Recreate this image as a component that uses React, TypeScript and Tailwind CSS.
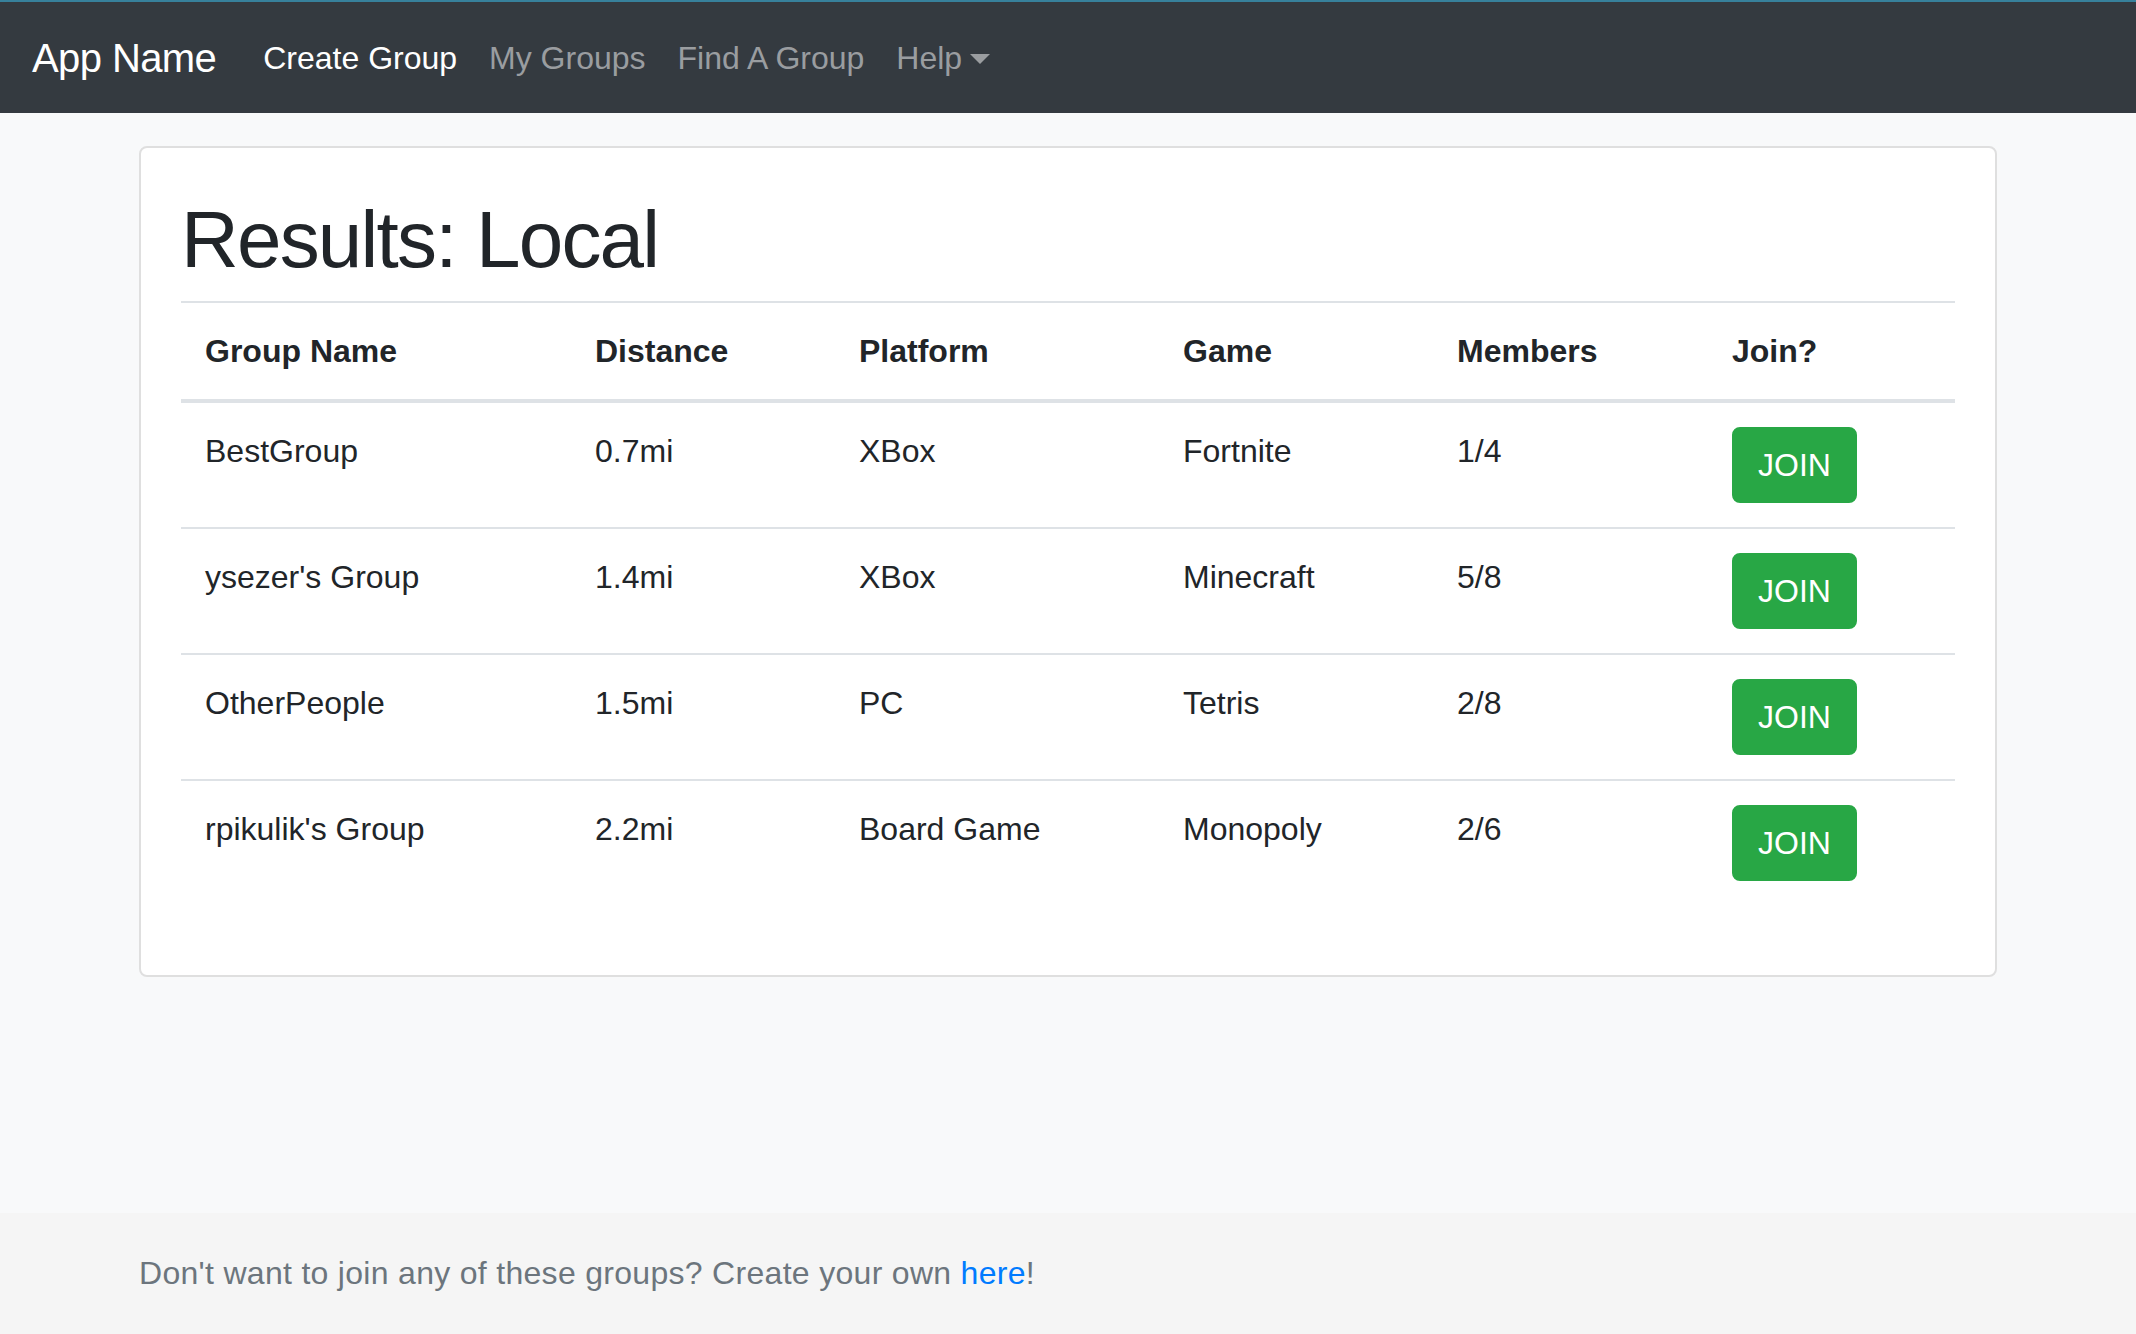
const groups = [
  { name: "BestGroup", distance: "0.7mi", platform: "XBox", game: "Fortnite", members: "1/4" },
  { name: "ysezer's Group", distance: "1.4mi", platform: "XBox", game: "Minecraft", members: "5/8" },
  { name: "OtherPeople", distance: "1.5mi", platform: "PC", game: "Tetris", members: "2/8" },
  { name: "rpikulik's Group", distance: "2.2mi", platform: "Board Game", game: "Monopoly", members: "2/6" },
];

function Navbar() {
  return (
    <nav className="h-[113px] shrink-0 bg-[#343a40] border-t-2 border-[#37819c] flex items-center px-[32px]">
      <a href="#" className="text-[40px] leading-[60px] text-white mr-[31px] tracking-[-0.6px]">
        App Name
      </a>
      <ul className="flex items-center text-[32px] leading-[48px]">
        <li className="px-[16px] text-white">Create Group</li>
        <li className="px-[16px] text-[#9a9da0]">My Groups</li>
        <li className="px-[16px] text-[#9a9da0]">Find A Group</li>
        <li className="px-[16px] text-[#9a9da0] flex items-center">
          Help
          <span className="ml-[8px] mt-[2px] w-0 h-0 border-x-[10px] border-x-transparent border-t-[10px] border-t-[#9a9da0]" />
        </li>
      </ul>
    </nav>
  );
}

function ResultsCard() {
  const th = "text-left font-bold align-bottom px-[24px] py-[24px] border-t-2 border-b-4 border-[#dee2e6]";
  const td = "align-top p-[24px] border-t-2 border-[#dee2e6]";
  return (
    <div className="w-[1858px] mx-auto mt-[33px] bg-white border-2 border-[#dfdfdf] rounded-[8px] px-[40px] pt-[40px] pb-[70px]">
      <h1 className="text-[80px] leading-[96px] pt-[4px] mb-[13px] tracking-[-1.8px] font-medium">Results: Local</h1>
      <table className="w-full table-fixed border-collapse text-[32px] leading-[48px]">
        <colgroup>
          <col className="w-[390px]" />
          <col className="w-[264px]" />
          <col className="w-[324px]" />
          <col className="w-[274px]" />
          <col className="w-[275px]" />
          <col />
        </colgroup>
        <thead>
          <tr>
            <th className={th}>Group Name</th>
            <th className={th}>Distance</th>
            <th className={th}>Platform</th>
            <th className={th}>Game</th>
            <th className={th}>Members</th>
            <th className={th}>Join?</th>
          </tr>
        </thead>
        <tbody>
          {groups.map((g) => (
            <tr key={g.name}>
              <td className={td}>{g.name}</td>
              <td className={td}>{g.distance}</td>
              <td className={td}>{g.platform}</td>
              <td className={td}>{g.game}</td>
              <td className={td}>{g.members}</td>
              <td className={td}>
                <button className="block w-fit bg-[#28a745] border-2 border-[#28a745] text-white rounded-[8px] px-[24px] py-[12px] text-[32px] leading-[48px]">
                  JOIN
                </button>
              </td>
            </tr>
          ))}
        </tbody>
      </table>
    </div>
  );
}

export default function App() {
  return (
    <div className="min-h-screen flex flex-col bg-[#f8f9fa] text-[#212529] font-['Liberation_Sans',Arial,sans-serif]">
      <Navbar />
      <main className="flex-1">
        <ResultsCard />
      </main>
      <footer className="h-[121px] shrink-0 bg-[#f5f5f5]">
        <div className="w-[1858px] mx-auto text-[32px] leading-[121px] text-[#6c757d] tracking-[0.3px]">
          Don't want to join any of these groups? Create your own{" "}
          <a href="#" className="text-[#007bff]">here</a>!
        </div>
      </footer>
    </div>
  );
}
